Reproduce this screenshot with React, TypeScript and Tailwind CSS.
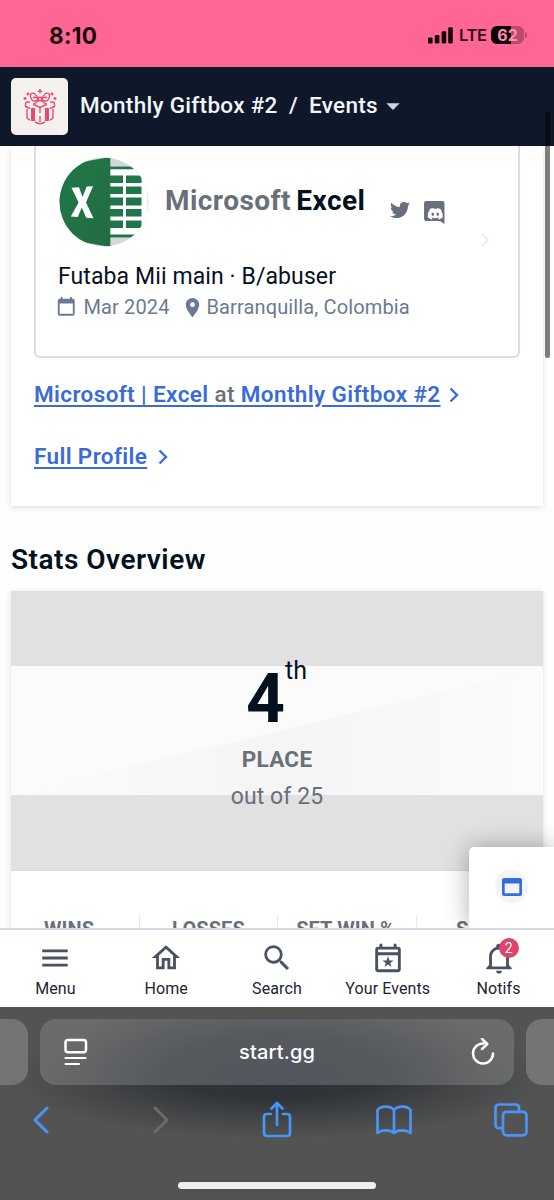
import React from 'react';
import { FaTwitter, FaDiscord } from 'react-icons/fa';
import { MdArrowDropDown, MdLocationOn, MdMenu, MdOutlineHome, MdSearch } from 'react-icons/md';

interface NavItemProps {
  label: string;
  children: React.ReactNode;
}

const SignalIcon = () => (
  <svg width="25" height="17" viewBox="0 0 25 17" fill="#14060b">
    <rect x="0" y="10.5" width="4.6" height="6" rx="1.3" />
    <rect x="6.8" y="8" width="4.6" height="8.5" rx="1.3" />
    <rect x="13.6" y="4.2" width="4.6" height="12.3" rx="1.3" />
    <rect x="20.2" y="0.2" width="4.6" height="16.3" rx="1.3" />
  </svg>
);

const GiftIcon = () => (
  <svg width="34" height="36" viewBox="0 0 34 36" fill="none" stroke="#ec4a6c" strokeWidth="1.4">
    <path d="M15.500 9.500C13 5 9.500 2.800 8 5C6.500 7.500 8.500 12 11 12C13 12 15 11 16 10M18.500 9.500C21 5 24.500 2.800 26 5C27.500 7.500 25.500 12 23 12C21 12 19 11 18 10" />
    <path d="M15 9.500C12.500 8 11 7.800 10 9M19 9.500C21.500 8 23 7.800 24 9M15.500 12L10 15.500M18.500 12L24 15.500" />
    <circle cx="17" cy="10" r="1.800" />
    <path d="M7 13H4.500C3 13 2.500 14 2.500 15.500V17.500L7 19.500M27 13H29.500C31 13 31.500 14 31.500 15.500V17.500L27 19.500M10.500 15.500L17 18.500L23.500 15.500M17 18.500V24M17 27V33" />
    <path d="M4 20V28C4 30 5 30.500 7 31M30 20V28C30 30 29 30.500 27 31M12 33L17 35L22 33" />
    <path d="M10 19V32M24 19V32" strokeWidth="4" />
    <path d="M17 0V4.400M14.800 2.200H19.200M5 3.500V6.500M3.500 5H6.500M29 3.500V6.500M27.500 5H30.500M2 8V11M0.500 9.500H3.500M32 8V11M30.500 9.500H33.500" />
  </svg>
);

const ExcelLogo = () => (
  <svg width="90" height="90" viewBox="0 0 90 90">
    <defs>
      <clipPath id="avatar">
        <circle cx="45" cy="45" r="44.500" />
      </clipPath>
      <linearGradient id="cover" x1="0" y1="0" x2="1" y2="1">
        <stop offset="0" stopColor="#20794a" />
        <stop offset="1" stopColor="#236b40" />
      </linearGradient>
    </defs>
    <g clipPath="url(#avatar)">
      <rect width="90" height="90" fill="#d3d6da" />
      <path d="M0 0H28V5L0 12zM0 90H28V85L0 78z" fill="#fff" />
      <rect x="50" y="9.500" width="38.500" height="71" rx="3" fill="#fff" />
      <g fill="#21754a">
        <path d="M51 9.500H85V12.300H51zM51 77.500H85V80.500H51z" />
        <path d="M51 18.500H64V26H51zM67 18.500H80.500Q82.500 18.500 82.500 20.500V26H67z" />
        <path d="M51 29.500H64V37H51zM67 29.500H82.500V37H67zM51 40.500H64V48.500H51zM67 40.500H82.500V48.500H67zM51 52H64V59.500H51zM67 52H82.500V59.500H67z" />
        <path d="M51 63.500H64V71H51zM67 63.500H82.500V69Q82.500 71 80.500 71H67z" />
      </g>
      <path d="M0 9L51.300 0V90L0 81z" fill="url(#cover)" />
      <path d="M12.500 30.800L20 30.200L23.500 40L27.700 29.600L34 29.200L27 45.500L34.500 61.300L27.200 60.800L22.800 50.600L18.800 60L11.800 59.600L19.600 45.500z" fill="#fff" />
    </g>
  </svg>
);

const CalendarIcon = () => (
  <svg width="22.500" height="22.500" viewBox="0 0 24 24" fill="currentColor">
    <path d="M19,19H5V8H19M16,1V3H8V1H6V3H5C3.890,3 3,3.890 3,5V19A2,2 0 0,0 5,21H19A2,2 0 0,0 21,19V5C21,3.890 20.100,3 19,3H18V1" />
  </svg>
);

const DiscordIcon = () => (
  <svg width="24.500" height="24.500" viewBox="0 0 24 24" fill="#697079">
    <path d="M22 23.500L17.500 20.500H4A2 2 0 0 1 2 18.500V3A2 2 0 0 1 4 1H20A2 2 0 0 1 22 3z" />
    <FaDiscord x="5" y="5.500" width="14" height="11" color="#fff" />
  </svg>
);

const EventIcon = () => (
  <svg width="34" height="34" viewBox="0 0 24 24" fill="currentColor">
    <path fillRule="evenodd" d="M19 4H18V2H16V4H8V2H6V4H5A2 2 0 0 0 3 6V20A2 2 0 0 0 5 22H19A2 2 0 0 0 21 20V6A2 2 0 0 0 19 4M19 20H5V10H19zM19 8H5V6H19z" />
    <path d="M12 10.800L13 13.700H16L13.600 15.500L14.500 18.400L12 16.600L9.500 18.400L10.400 15.500L8 13.700H11z" />
  </svg>
);

const BellIcon = () => (
  <svg width="34" height="34" viewBox="0 0 24 24" fill="currentColor">
    <path d="M10,21H14A2,2 0 0,1 12,23A2,2 0 0,1 10,21M21,19V20H3V19L5,17V11C5,7.900 7.030,5.170 10,4.290C10,4.190 10,4.100 10,4A2,2 0 0,1 12,2A2,2 0 0,1 14,4C14,4.100 14,4.190 14,4.290C16.970,5.170 19,7.900 19,11V17L21,19M17,11A5,5 0 0,0 12,6A5,5 0 0,0 7,11V18H17V11Z" />
  </svg>
);

const Chevron = () => (
  <svg width="10" height="16" viewBox="0 0 10 16" fill="none" stroke="currentColor" strokeWidth="2.400">
    <path d="M1.500 1.500L8 8L1.500 14.500" />
  </svg>
);

const NavItem: React.FC<NavItemProps> = ({ label, children }) => (
  <div className="flex flex-1 flex-col items-center pt-[11px] text-[#4a5160]">
    <div className="relative h-[34px] w-[34px]">{children}</div>
    <span className="mt-[4px] whitespace-nowrap text-[16px] leading-[20px] tracking-[0.1px] text-[#1c2433]">{label}</span>
  </div>
);

const StatusBar = () => (
  <div className="flex h-[67px] shrink-0 items-start justify-between bg-[#ff6693] pr-[27px] pl-[49px] pt-[25px] font-[Inter,sans-serif]">
    <span className="text-[22.5px] font-bold leading-[22px] tracking-[0.3px] text-[#14060b]">8:10</span>
    <div className="flex h-[20px] items-center">
      <SignalIcon />
      <span className="ml-[6px] w-[27px] text-[16.5px] font-semibold leading-[20px] tracking-[-0.3px] text-[#2a0e18]">LTE</span>
      <div className="ml-[5px] flex h-[18px] w-[33px] items-center justify-center rounded-[6px] bg-[linear-gradient(90deg,#0c0407_62%,#b94a6c_62%)] text-[16px] font-bold leading-[18px] text-[#ff8fb0]">62</div>
      <div className="ml-[1px] h-[6px] w-[2px] rounded-r-full bg-[#b94a6c]" />
    </div>
  </div>
);

const EventHeader = () => (
  <header className="relative z-10 flex h-[79px] shrink-0 items-center bg-[#0f172a] pl-[11px] text-[22.5px] font-medium text-[#f1f5f9]">
    <div className="flex h-[57px] w-[57px] items-center justify-center rounded-[5px] bg-[#f5f1ee]">
      <GiftIcon />
    </div>
    <div className="-mt-[2px] flex items-center">
      <span className="ml-[12px] w-[197px] whitespace-nowrap tracking-[0.3px]">Monthly Giftbox #2</span>
      <span className="ml-[12px] w-[9px]">/</span>
      <span className="ml-[11px] w-[69px] tracking-[0.3px]">Events</span>
      <MdArrowDropDown className="-ml-[1px] h-[32px] w-[32px] text-[#cbd5e1]" />
    </div>
  </header>
);

const ProfileCard = () => (
  <section className="mx-[11px] h-[360px] shrink-0 bg-white px-[23px] shadow-[0_2px_6px_rgba(0,0,0,0.12)]">
    <div className="relative h-[211.5px] rounded-b-[6px] border-x-2 border-b-2 border-[#dadee2] pl-[22px] pt-[11px]">
      <div className="flex h-[90px] items-center pl-[1px]">
        <ExcelLogo />
        <h1 className="-mt-[3px] ml-[16px] w-[201px] whitespace-nowrap text-[28px] font-bold leading-[34px] tracking-[0.45px] text-[#03111f] [word-spacing:-2px]">
          <span className="text-[#697079]">Microsoft</span> Excel
        </h1>
        <FaTwitter className="ml-[24px] mt-[15px] h-[20px] w-[20px] text-[#697079]" />
        <div className="ml-[12px] mt-[20px]">
          <DiscordIcon />
        </div>
      </div>
      <p className="mt-[17px] text-[23px] leading-[26px] tracking-[0.1px] text-[#03111f]">Futaba Mii main · B/abuser</p>
      <div className="mt-[4px] flex h-[26px] items-center text-[20px] tracking-[0.13px] text-[#6b7a94]">
        <span className="-ml-[3px]"><CalendarIcon /></span>
        <span className="ml-[6px] w-[86px] whitespace-nowrap">Mar 2024</span>
        <MdLocationOn className="ml-[11px] h-[23px] w-[23px]" />
        <span className="ml-[3px] whitespace-nowrap">Barranquilla, Colombia</span>
      </div>
      <div className="absolute right-[28px] top-[86px] text-[#eff0f1]">
        <Chevron />
      </div>
    </div>
    <div className="mt-[21px] flex h-[32px] items-center text-[22.5px] font-semibold tracking-[0.38px] text-[#3a6bd8]">
      <a className="w-[405px] whitespace-nowrap underline decoration-[1.5px] underline-offset-[3px]">
        Microsoft | Excel <span className="font-medium text-[#697079]">at</span> Monthly Giftbox #2
      </a>
      <span className="ml-[10px]"><Chevron /></span>
    </div>
    <div className="mt-[30px] flex h-[32px] items-center text-[22.5px] font-semibold tracking-[0.38px] text-[#3a6bd8]">
      <a className="w-[113px] whitespace-nowrap underline decoration-[1.5px] underline-offset-[3px]">Full Profile</a>
      <span className="ml-[11px]"><Chevron /></span>
    </div>
  </section>
);

const stats = [
  { label: 'WINS', width: 'w-[128px] pr-[12px]' },
  { label: 'LOSSES', width: 'w-[138px] border-l' },
  { label: 'SET WIN %', width: 'w-[139px] border-l pr-[3px]' },
  { label: 'SEED', width: 'w-[127px] border-l' },
];

const StatsCard = () => (
  <section className="mx-[11px] mt-[14px] shrink-0 bg-white shadow-[0_1px_6px_rgba(0,0,0,0.12)]">
    <div className="relative h-[280px] border-b border-[#d8d8d8] bg-[#e1e1e1] pt-[75px]">
      <svg className="block" width="532" height="129" viewBox="0 0 532 129">
        <defs>
          <linearGradient id="shade" x1="0" x2="1" y1="0" y2="0">
            <stop offset="0" stopColor="#fbfbfb" />
            <stop offset="0.500" stopColor="#f5f5f5" />
            <stop offset="0.700" stopColor="#f7f7f7" />
            <stop offset="1" stopColor="#fbfbfb" />
          </linearGradient>
        </defs>
        <rect width="532" height="129" fill="#fbfbfb" />
        <path d="M0 129L532 2V129z" fill="url(#shade)" />
      </svg>
      <div className="absolute inset-x-0 top-[66px] flex flex-col items-center">
        <div className="flex h-[87px] items-start text-[#03111f]">
          <span className="-ml-[1px] mt-[2px] text-[68px] font-bold leading-[80px]">4</span>
          <span className="text-[25px] leading-[28px]">th</span>
        </div>
        <span className="text-[22.5px] font-bold leading-[30px] tracking-[0.3px] text-[#697079]">PLACE</span>
        <span className="mt-[8px] text-[23px] leading-[30px] tracking-[0.1px] text-[#697079]">out of 25</span>
      </div>
    </div>
    <div className="mt-[44px] flex h-[60px]">
      {stats.map(stat => (
        <div key={stat.label} className={`${stat.width} border-[#e8eaec] pt-[2px] text-center text-[20px] font-bold leading-[24px] tracking-[0.1px] text-[#697079]`}>
          {stat.label}
        </div>
      ))}
    </div>
  </section>
);

const BottomNav = () => (
  <nav className="relative z-20 flex h-[79px] shrink-0 border-t-2 border-[#d3d8e2] bg-white">
    <NavItem label="Menu"><MdMenu className="h-[34px] w-[34px]" /></NavItem>
    <NavItem label="Home"><MdOutlineHome className="h-[34px] w-[34px]" /></NavItem>
    <NavItem label="Search"><MdSearch className="h-[34px] w-[34px]" /></NavItem>
    <NavItem label="Your Events"><EventIcon /></NavItem>
    <NavItem label="Notifs">
      <BellIcon />
      <span className="absolute -top-[3px] left-[17px] flex h-[20px] w-[20px] items-center justify-center rounded-full bg-[#e0446a] text-[14px] leading-none text-white">2</span>
    </NavItem>
  </nav>
);

const BrowserBar = () => (
  <div className="relative flex h-[193px] shrink-0 flex-col overflow-hidden bg-[#535353] bg-[radial-gradient(ellipse_270px_62px_at_50%_70px,#2d3137_0%,#2f3439_35%,#414345_65%,transparent_100%)]">
    <div className="mt-[12px] flex h-[66px] justify-between">
      <div className="w-[28px] rounded-r-[16px] bg-[#747474]" />
      <div className="flex w-[474px] items-center justify-between rounded-[16px] bg-[#6b6b6b] bg-[radial-gradient(ellipse_240px_90px_at_50%_90%,#53575d_0%,#565a5f_50%,transparent_100%)] pr-[19px] pl-[24px]">
        <svg width="24" height="28" viewBox="0 0 24 28" fill="none" stroke="#fff" strokeWidth="2.500" strokeLinecap="round">
          <rect x="1.500" y="2" width="20.500" height="12.300" rx="2.500" />
          <path d="M1.500 20H21.500M1.500 26H15" strokeWidth="2.200" />
        </svg>
        <span className="-ml-[5px] text-[20px] font-medium leading-[26px] font-[Inter,sans-serif] tracking-[0.15px] text-white">start.gg</span>
        <svg width="24" height="28" viewBox="0 0 24 28" fill="none" stroke="#fff" strokeWidth="2.500" strokeLinecap="round" strokeLinejoin="round">
          <path d="M12.500 5.500A10 10 0 1 0 22 15.500M11 1L16.300 6L11 11" />
        </svg>
      </div>
      <div className="w-[28px] rounded-l-[16px] bg-[#747474]" />
    </div>
    <div className="mt-[15px] flex h-[40px] items-center justify-between pr-[26px] pl-[32px]">
      <svg width="18" height="28" viewBox="0 0 18 28" fill="none" stroke="#4895f7" strokeWidth="3" strokeLinecap="round" strokeLinejoin="round">
        <path d="M15 2L3 14L15 26" />
      </svg>
      <svg className="ml-[102px]" width="18" height="28" viewBox="0 0 18 28" fill="none" stroke="#6a6a6a" strokeWidth="3" strokeLinecap="round" strokeLinejoin="round">
        <path d="M3 2L15 14L3 26" />
      </svg>
      <svg className="ml-[92px]" width="30" height="38" viewBox="0 0 30 38" fill="none" stroke="#4895f7" strokeWidth="2.700" strokeLinecap="round" strokeLinejoin="round">
        <path d="M9 13H5Q2 13 2 16V32Q2 35 5 35H25Q28 35 28 32V16Q28 13 25 13H21M15 24V2.500M9.500 7.500L15 2L20.500 7.500" />
      </svg>
      <svg className="ml-[84px]" width="36" height="30" viewBox="0 0 36 30" fill="none" stroke="#4895f7" strokeWidth="2.700" strokeLinejoin="round">
        <path d="M18 5C14.500 0.500 5 0.500 1.500 5V28C6 24.500 14 24.500 18 28C22 24.500 30 24.500 34.500 28V5C31 0.500 21.500 0.500 18 5V28" />
      </svg>
      <svg className="ml-[82px]" width="34" height="34" viewBox="0 0 34 34" fill="none" stroke="#4895f7" strokeWidth="2.700">
        <path d="M9 25.200H5Q1.500 25.200 1.500 21.500V5Q1.500 1.500 5 1.500H21.500Q25 1.500 25 5V8.500" />
        <rect x="9" y="8.800" width="23.500" height="23.500" rx="3.500" />
      </svg>
    </div>
    <div className="mx-auto mt-[42px] h-[7px] w-[198px] rounded-full bg-[#efefef]" />
  </div>
);

export default function App() {
  return (
    <div className="relative flex h-[1200px] w-[554px] flex-col overflow-hidden bg-[#fefefe] font-[Roboto,sans-serif]">
      <StatusBar />
      <EventHeader />
      <main className="relative flex h-[782px] shrink-0 flex-col overflow-hidden">
        <ProfileCard />
        <h2 className="ml-[11px] mt-[37px] shrink-0 text-[28px] font-semibold leading-[34px] tracking-[0.5px] text-[#03111f]">Stats Overview</h2>
        <StatsCard />
        {/* Floating widget */}
        <div className="absolute bottom-0 right-0 flex h-[81px] w-[85px] justify-center rounded-tl-[5px] bg-white pt-[23px] shadow-[0_0_24px_rgba(0,0,0,0.32)]">
          <div className="flex h-[33px] w-[33px] items-center justify-center rounded-full bg-[#f1f4f8]">
            <svg width="20" height="18" viewBox="0 0 20 18" fill="#3a6bdc">
              <path fillRule="evenodd" d="M2 0H18Q20 0 20 2V16Q20 18 18 18H2Q0 18 0 16V2Q0 0 2 0zM2.700 5.500V15.300H17.300V5.500z" />
            </svg>
          </div>
        </div>
      </main>
      <BottomNav />
      <BrowserBar />
      {/* Page scrollbar */}
      <div className="absolute right-[4px] top-[111px] z-30 h-[247px] w-[5px] rounded-full bg-black/50" />
    </div>
  );
}
